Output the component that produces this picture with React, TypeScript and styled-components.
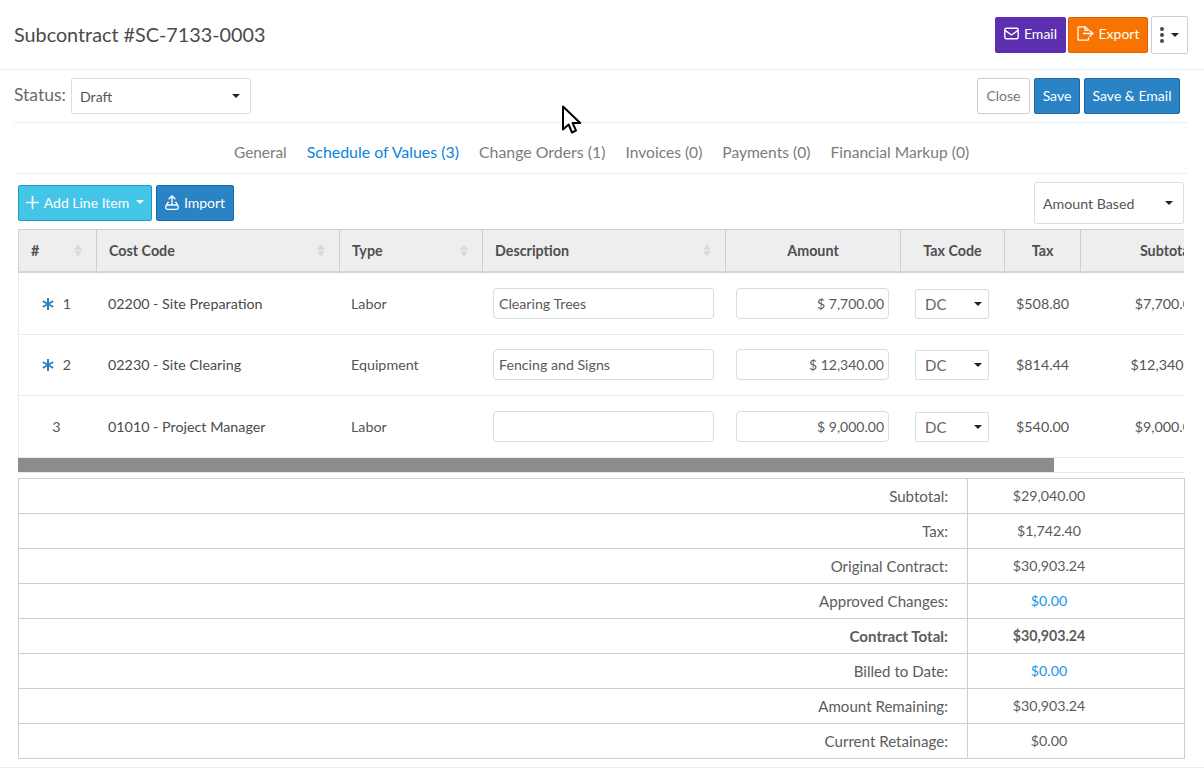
import React from "react";
import styled, { createGlobalStyle } from "styled-components";

const Global = createGlobalStyle`
  html, body { margin: 0; padding: 0; background: #fff; }
  body { font-family: Lato, "Open Sans", sans-serif; font-size: 14px; color: #555; }
  * { box-sizing: border-box; }
`;

const Page = styled.div`
  position: relative;
  width: 1204px;
  height: 774px;
  overflow: hidden;
`;

const Header = styled.header`
  height: 70px;
  display: flex;
  align-items: center;
  justify-content: space-between;
  padding: 0 16px 0 14px;
  border-bottom: 1px solid #e7efed;
`;

const Title = styled.h1`
  margin: 0 0 2px;
  font-size: 19.8px;
  font-weight: 400;
  color: #4a4a4a;
`;

const Group = styled.div<{ $gap: number }>`
  display: flex;
  align-items: center;
  gap: ${(p) => p.$gap}px;
`;

const colors = {
  purple: ["#5c2fb0", "#5c2fb0", "#fff"],
  orange: ["#f97300", "#d96500", "#fff"],
  blue: ["#2a83c5", "#1a6aa8", "#fff"],
  cyan: ["#43c5e8", "#1b9dc2", "#fff"],
  plain: ["#fff", "#cfcfcf", "#777"],
} as const;

const Button = styled.button<{ $tone: keyof typeof colors; $w: number; $h?: number }>`
  display: inline-flex;
  align-items: center;
  justify-content: center;
  gap: 5px;
  width: ${(p) => p.$w}px;
  height: ${(p) => p.$h ?? 36}px;
  padding: 0 0 2px;
  font-family: inherit;
  font-size: 14px;
  border-radius: 2px;
  background: ${(p) => colors[p.$tone][0]};
  border: 1px solid ${(p) => colors[p.$tone][1]};
  color: ${(p) => colors[p.$tone][2]};
`;

const MoreButton = styled(Button)`
  margin-left: 1px;
  padding: 0;
`;

const Caret = styled.span<{ $color?: string }>`
  display: inline-block;
  width: 0;
  height: 0;
  border-left: 4px solid transparent;
  border-right: 4px solid transparent;
  border-top: 4px solid ${(p) => p.$color ?? "#222"};
`;

const WhiteCaret = styled(Caret)`
  margin-left: 2px;
`;

const Dots = styled.span`
  display: flex;
  flex-direction: column;
  gap: 2px;
  margin-right: 2px;
  & > i {
    width: 4px;
    height: 4px;
    border-radius: 50%;
    background: #3c4a5a;
  }
`;

const StatusRow = styled.div`
  height: 53px;
  margin-left: 14px;
  margin-right: 17px;
  padding-right: 7px;
  display: flex;
  align-items: center;
  justify-content: space-between;
  border-bottom: 1px solid #e7efed;
`;

const StatusLabel = styled.span`
  font-size: 17.5px;
  line-height: 20px;
  margin: 0 5px 2px 0;
  color: #6a6a6a;
`;

const Select = styled.div<{ $w: number; $h: number; $left: number; $right: number; $size?: number }>`
  width: ${(p) => p.$w}px;
  height: ${(p) => p.$h}px;
  padding: 0 ${(p) => p.$right}px 0 ${(p) => p.$left}px;
  display: flex;
  align-items: center;
  justify-content: space-between;
  border: 1px solid #d5e2e0;
  border-radius: 2px;
  background: #fff;
  font-size: ${(p) => p.$size ?? 14.2}px;
  color: #555;
`;

const TaxSelect = styled(Select)`
  margin-left: 3px;
  color: #666;
`;

const Tabs = styled.nav`
  height: 51px;
  margin-left: 15px;
  margin-right: 17px;
  padding: 8px 0 0 219px;
  display: flex;
  align-items: center;
  gap: 20px;
  border-bottom: 1px solid #e7efed;
`;

const Tab = styled.span<{ $active?: boolean; $size?: number }>`
  font-size: ${(p) => p.$size ?? 15.6}px;
  line-height: 20px;
  color: ${(p) => (p.$active ? "#0a84dc" : "#7c7c7c")};
`;

const Toolbar = styled.div`
  height: 55px;
  margin: 0 20px 0 18px;
  display: flex;
  align-items: flex-start;
  justify-content: space-between;
  padding-top: 8px;
  & > div:first-child { margin-top: 3px; }
`;

const TableWrap = styled.div`
  width: 1166px;
  margin-left: 18px;
  overflow: hidden;
`;

const Items = styled.table`
  width: 1235px;
  table-layout: fixed;
  border-collapse: separate;
  border-spacing: 0;
`;

const Th = styled.th<{ $align?: string }>`
  position: relative;
  height: 44px;
  padding: 0 12px;
  background: #eeeeee;
  border-top: 1px solid #cfcfcf;
  border-bottom: 2px solid #d2d6d6;
  border-right: 1px solid #cfcfcf;
  text-align: ${(p) => p.$align ?? "left"};
  font-size: 14.3px;
  font-weight: 700;
  color: #4f4f4f;
  &:first-child { border-left: 1px solid #cfcfcf; }
`;

const Sort = styled.span`
  position: absolute;
  right: 14px;
  top: 14px;
  display: flex;
  flex-direction: column;
  gap: 1px;
  & > i {
    width: 0;
    height: 0;
    border-left: 4px solid transparent;
    border-right: 4px solid transparent;
  }
  & > i:first-child { border-bottom: 6px solid #dadada; }
  & > i:last-child { border-top: 6px solid #dadada; }
`;

const Td = styled.td<{ $align?: string; $ink?: string; $h: number; $lift?: number }>`
  height: ${(p) => p.$h}px;
  padding: 0 11px ${(p) => p.$lift ?? 0}px;
  border-bottom: 1px solid #e3efec;
  text-align: ${(p) => p.$align ?? "left"};
  font-size: 14.3px;
  color: ${(p) => p.$ink ?? "#555"};
  white-space: nowrap;
  overflow: hidden;
  &:first-child { border-left: 1px solid #e0efec; }
`;

const NumberCell = styled.span`
  display: flex;
  align-items: center;
  justify-content: center;
  gap: 9px;
  padding-right: 3px;
`;

const TextBox = styled.div<{ $w: number; $amount?: boolean }>`
  width: ${(p) => p.$w}px;
  height: 31px;
  margin-left: -1px;
  padding: 0 ${(p) => (p.$amount ? 4 : 5)}px 0 5px;
  line-height: 29px;
  border: 1px solid #cfe0dd;
  border-radius: 4px;
  background: #fff;
  color: #5a5a5a;
  font-size: ${(p) => (p.$amount ? 14 : 14.2)}px;
  text-align: ${(p) => (p.$amount ? "right" : "left")};
`;

const Track = styled.div`
  height: 15px;
  border-bottom: 1px solid #e0efec;
`;

const Thumb = styled.div`
  height: 14px;
  background: #8c8c8c;
`;

const Summary = styled.table`
  width: 1166px;
  margin: 5px 0 0 18px;
  border-collapse: collapse;
  table-layout: fixed;
`;

const SummaryLabel = styled.td<{ $bold?: boolean }>`
  height: 35px;
  padding: 0 19px 0 0;
  text-align: right;
  border: 1px solid #cfcfcf;
  font-size: 15.1px;
  font-weight: ${(p) => (p.$bold ? 700 : 400)};
  color: #5c5c5c;
`;

const SummaryValue = styled.td<{ $bold?: boolean; $link?: boolean }>`
  height: 35px;
  padding: 0 54px 2px 0;
  text-align: center;
  border: 1px solid #cfcfcf;
  font-size: 14.2px;
  font-weight: ${(p) => (p.$bold ? 700 : 400)};
  color: ${(p) => (p.$link ? "#1a96e6" : "#5c5c5c")};
`;

const BottomRule = styled.div`
  height: 1px;
  margin-top: 8px;
  background: #e7efed;
`;

const Pointer = styled.svg`
  position: absolute;
  left: 561px;
  top: 105px;
`;

const EnvelopeIcon = () => (
  <svg width="15" height="13" viewBox="0 0 15 13" fill="none" stroke="#fff" strokeWidth="1.4">
    <rect x="0.8" y="1.2" width="13.4" height="10.6" rx="1.5" />
    <path d="M1 3.4 7.5 8l6.5-4.6" />
  </svg>
);

const ExportIcon = () => (
  <svg width="17" height="15" viewBox="0 0 17 15" fill="none" stroke="#fff" strokeWidth="1.3">
    <path d="M11.5 4.5V4L8.2.8H2a1 1 0 0 0-1 1v11.4a1 1 0 0 0 1 1h8.5a1 1 0 0 0 1-1v-2" />
    <path d="M8 .8v3.6h3.5" />
    <path d="M6 7.5h9M12.5 4.6l3.4 2.9-3.4 2.9" />
  </svg>
);

const PlusIcon = () => (
  <svg width="13" height="13" viewBox="0 0 13 13" stroke="#fff" strokeWidth="1.6">
    <path d="M6.5 0v13M0 6.5h13" />
  </svg>
);

const ImportIcon = () => (
  <svg width="14" height="15" viewBox="0 0 14 15" fill="none" stroke="#fff" strokeWidth="1.3">
    <path d="M7 10V1M3.6 4.2 7 1l3.4 3.2" />
    <rect x="0.7" y="10" width="12.6" height="4.3" rx="1.8" />
    <path d="M4 7.4H2.9L1.4 10.4M10 7.4h1.1l1.5 3" />
  </svg>
);

const StarIcon = () => (
  <svg width="12" height="12" viewBox="0 0 12 12" stroke="#2a81c3" strokeWidth="2">
    <path d="M6 0v12M.8 3l10.4 6M11.2 3 .8 9" />
  </svg>
);

const SortMark = () => (
  <Sort>
    <i />
    <i />
  </Sort>
);

const rows = [
  { n: "1", star: true, code: "02200 - Site Preparation", type: "Labor", desc: "Clearing Trees", amount: "$ 7,700.00", tax: "$508.80", sub: "$7,700.00", h: 62, lift: 0 },
  { n: "2", star: true, code: "02230 - Site Clearing", type: "Equipment", desc: "Fencing and Signs", amount: "$ 12,340.00", tax: "$814.44", sub: "$12,340.00", h: 61, lift: 1 },
  { n: "3", star: false, code: "01010 - Project Manager", type: "Labor", desc: "", amount: "$ 9,000.00", tax: "$540.00", sub: "$9,000.00", h: 62, lift: 0 },
];

const totals = [
  { label: "Subtotal:", value: "$29,040.00" },
  { label: "Tax:", value: "$1,742.40" },
  { label: "Original Contract:", value: "$30,903.24" },
  { label: "Approved Changes:", value: "$0.00", link: true },
  { label: "Contract Total:", value: "$30,903.24", bold: true },
  { label: "Billed to Date:", value: "$0.00", link: true },
  { label: "Amount Remaining:", value: "$30,903.24" },
  { label: "Current Retainage:", value: "$0.00" },
];

const App = () => {
  return (
    <Page>
      <Global />
      <Header>
        <Title>Subcontract #SC-7133-0003</Title>
        <Group $gap={2}>
          <Button $tone="purple" $w={71}>
            <EnvelopeIcon />
            Email
          </Button>
          <Button $tone="orange" $w={80}>
            <ExportIcon />
            Export
          </Button>
          <MoreButton $tone="plain" $w={37} $h={38}>
            <Dots>
              <i />
              <i />
              <i />
            </Dots>
            <Caret />
          </MoreButton>
        </Group>
      </Header>

      <StatusRow>
        <Group $gap={0}>
          <StatusLabel>Status:</StatusLabel>
          <Select $w={180} $h={36} $left={8} $right={10}>
            Draft
            <Caret />
          </Select>
        </Group>
        <Group $gap={4}>
          <Button $tone="plain" $w={53}>Close</Button>
          <Button $tone="blue" $w={46}>Save</Button>
          <Button $tone="blue" $w={96}>Save &amp; Email</Button>
        </Group>
      </StatusRow>

      <Tabs>
        <Tab $size={15.4}>General</Tab>
        <Tab $active $size={15.9}>Schedule of Values (3)</Tab>
        <Tab $size={15.9}>Change Orders (1)</Tab>
        <Tab>Invoices (0)</Tab>
        <Tab>Payments (0)</Tab>
        <Tab>Financial Markup (0)</Tab>
      </Tabs>

      <Toolbar>
        <Group $gap={4}>
          <Button $tone="cyan" $w={134}>
            <PlusIcon />
            Add Line Item
            <WhiteCaret $color="#fff" />
          </Button>
          <Button $tone="blue" $w={78}>
            <ImportIcon />
            Import
          </Button>
        </Group>
        <Select $w={150} $h={42} $left={8} $right={10}>
          Amount Based
          <Caret />
        </Select>
      </Toolbar>

      <TableWrap>
        <Items>
          <colgroup>
            <col width={79} />
            <col width={243} />
            <col width={143} />
            <col width={243} />
            <col width={175} />
            <col width={104} />
            <col width={76} />
            <col width={172} />
          </colgroup>
          <thead>
            <tr>
              <Th>#<SortMark /></Th>
              <Th>Cost Code<SortMark /></Th>
              <Th>Type<SortMark /></Th>
              <Th>Description<SortMark /></Th>
              <Th $align="center">Amount</Th>
              <Th $align="center">Tax Code</Th>
              <Th $align="center">Tax</Th>
              <Th $align="center">Subtotal</Th>
            </tr>
          </thead>
          <tbody>
            {rows.map((row) => (
              <tr key={row.n}>
                <Td $h={row.h} $lift={row.lift}>
                  <NumberCell>
                    {row.star && <StarIcon />}
                    {row.n}
                  </NumberCell>
                </Td>
                <Td $h={row.h} $lift={row.lift} $ink="#4a4a4a">{row.code}</Td>
                <Td $h={row.h} $lift={row.lift}>{row.type}</Td>
                <Td $h={row.h} $lift={row.lift}>
                  <TextBox $w={221}>{row.desc}</TextBox>
                </Td>
                <Td $h={row.h} $lift={row.lift}>
                  <TextBox $w={153} $amount>{row.amount}</TextBox>
                </Td>
                <Td $h={row.h} $lift={row.lift}>
                  <TaxSelect $w={74} $h={30} $left={9} $right={6} $size={15}>
                    DC
                    <Caret />
                  </TaxSelect>
                </Td>
                <Td $h={row.h} $lift={row.lift}>{row.tax}</Td>
                <Td $h={row.h} $lift={row.lift} $align="center">{row.sub}</Td>
              </tr>
            ))}
          </tbody>
        </Items>
        <Track>
          <Thumb style={{ width: `${(1036 / 1166) * 100}%` }} />
        </Track>
      </TableWrap>

      <Summary>
        <colgroup>
          <col width={949} />
          <col width={217} />
        </colgroup>
        <tbody>
          {totals.map((t) => (
            <tr key={t.label}>
              <SummaryLabel $bold={t.bold}>{t.label}</SummaryLabel>
              <SummaryValue $bold={t.bold} $link={t.link}>{t.value}</SummaryValue>
            </tr>
          ))}
        </tbody>
      </Summary>
      <BottomRule />

      <Pointer width="22" height="30" viewBox="0 0 22 30">
        <path
          d="M2 1.5v23l5.6-5 3.4 8 4-1.8-3.4-7.7h7.6z"
          fill="#fff"
          stroke="#000"
          strokeWidth="2"
          strokeLinejoin="round"
        />
      </Pointer>
    </Page>
  );
};

export default App;
